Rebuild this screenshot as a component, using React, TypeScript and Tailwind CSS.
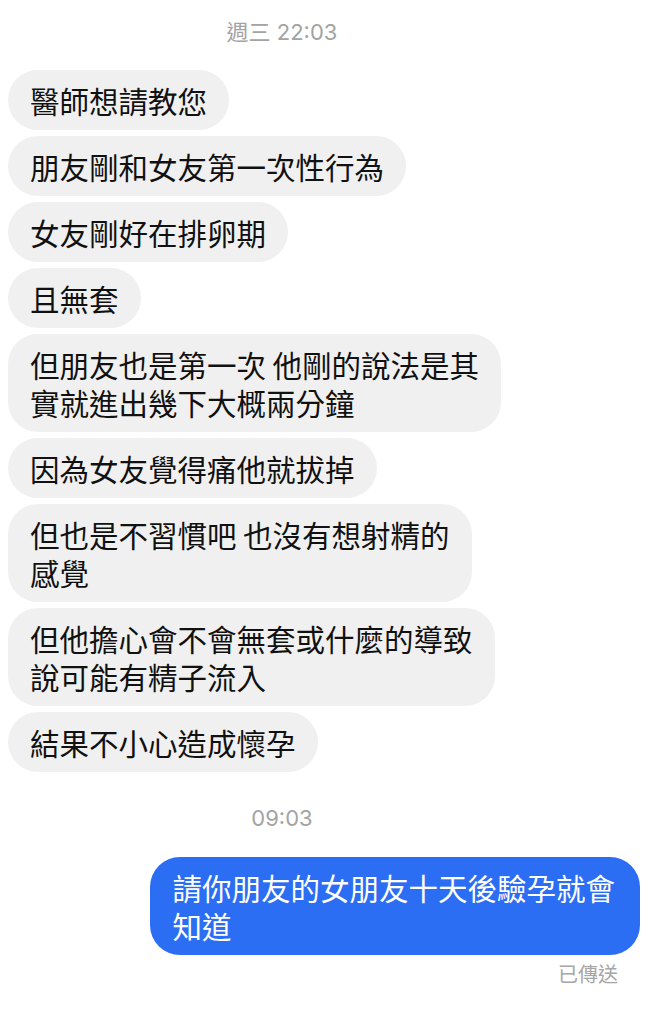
import React from 'react'

const FONT = '"Inter", "Noto Sans CJK TC", "Noto Sans CJK SC", sans-serif'
const CJK = '"Noto Sans CJK TC", "Noto Sans CJK SC", sans-serif'

const INCOMING: string[][] = [
  ['醫師想請教您'],
  ['朋友剛和女友第一次性行為'],
  ['女友剛好在排卵期'],
  ['且無套'],
  ['但朋友也是第一次 他剛的說法是其', '實就進出幾下大概兩分鐘'],
  ['因為女友覺得痛他就拔掉'],
  ['但也是不習慣吧 也沒有想射精的', '感覺'],
  ['但他擔心會不會無套或什麼的導致', '說可能有精子流入'],
  ['結果不小心造成懷孕'],
]

const OUTGOING = ['請你朋友的女朋友十天後驗孕就會', '知道']

// timestamps sit centred over the left ~564px, not the full width
function Timestamp({ children }: { children: React.ReactNode }) {
  return (
    <div
      className="w-[564px] text-center text-[22px] leading-[24px] text-[#a3a3a3]"
      style={{ fontFamily: FONT }}
    >
      {children}
    </div>
  )
}

function Lines({ lines }: { lines: string[] }) {
  return (
    <>
      {lines.map((line, i) => (
        <div key={i} className="whitespace-pre">
          {line}
        </div>
      ))}
    </>
  )
}

export default function App() {
  return (
    <div className="w-[654px] h-[1023px] bg-white overflow-hidden" style={{ fontFamily: CJK }}>
      <div className="pt-[20px]">
        <Timestamp>週三 22:03</Timestamp>
      </div>

      <div className="mt-[26px] flex flex-col items-start gap-[6px] pl-[8px]">
        {INCOMING.map((lines, i) => (
          <div
            key={i}
            className="rounded-[30px] bg-[#f0f0f0] pl-[22px] pr-[22px] py-[11px] text-[29.5px] leading-[38px] text-[#111111]"
          >
            <Lines lines={lines} />
          </div>
        ))}
      </div>

      <div className="mt-[34px]">
        <Timestamp>09:03</Timestamp>
      </div>

      <div className="mt-[27px] flex justify-end pr-[14px]">
        <div className="rounded-[30px] bg-[#2b6ef3] pl-[22px] pr-[25px] py-[11px] text-[29.5px] leading-[38px] text-white">
          <Lines lines={OUTGOING} />
        </div>
      </div>

      <div className="mt-[7px] flex justify-end pr-[36px]">
        <span className="text-[20px] leading-[24px] text-[#a6a6a6]">已傳送</span>
      </div>
    </div>
  )
}
